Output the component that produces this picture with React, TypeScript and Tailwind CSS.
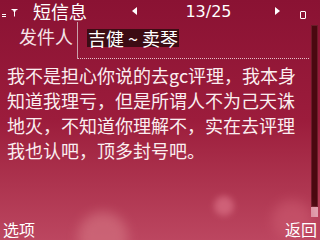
export default function App() {
  const cjk = { fontFamily: '"Noto Sans CJK SC", "Noto Sans", sans-serif' };

  return (
    <div
      className="relative w-[320px] h-[240px] overflow-hidden flex flex-col text-white bg-gradient-to-b from-[#8a1233] via-[#9c1c3c] to-[#bc4660]"
      style={cjk}
    >
      {/* background bokeh */}
      <div className="absolute left-[78px] top-[212px] w-[50px] h-[50px] rounded-full bg-[#d2707f] opacity-70 blur-[6px]" />
      <div className="absolute left-[214px] top-[196px] w-[20px] h-[20px] rounded-full bg-[#d66a80] opacity-80 blur-[3px]" />
      <div className="absolute left-[272px] top-[200px] w-[40px] h-[40px] rounded-full bg-[#cc5a70] opacity-60 blur-[6px]" />

      {/* status / title bar */}
      <div className="relative flex items-center h-[22px] shrink-0">
        <div className="w-[33px] flex items-end h-full pb-[5px] pl-[2px] gap-[5px]">
          <div className="flex flex-col gap-[1px]">
            <div className="w-[4px] h-[1px] bg-white" />
            <div className="w-[4px] h-[1px] bg-white" />
          </div>
          <svg width="7" height="8" viewBox="0 0 7 8">
            <path d="M0.5 0.5 H6.5 M3.5 0.5 V7.5 M1.5 0.5 L3.5 3 L5.5 0.5" stroke="white" strokeWidth="1" fill="none" />
          </svg>
        </div>
        <div className="w-[99px] h-full flex items-center">
          <span className="text-[18px] leading-[20px]">短信息</span>
        </div>
        <div className="w-[10px] flex items-center">
          <div className="w-0 h-0 border-y-[4px] border-y-transparent border-r-[5px] border-r-white" />
        </div>
        <div
          className="w-[133px] text-center text-[16px] leading-[22px] pt-[1px]"
          style={{ fontFamily: '"DejaVu Sans", sans-serif' }}
        >
          13/25
        </div>
        <div className="w-[25px] flex items-center">
          <div className="w-0 h-0 border-y-[4px] border-y-transparent border-l-[5px] border-l-white" />
        </div>
        <div className="flex items-end h-full pb-[3px]">
          <div className="w-[6px] h-[8px] border border-white rounded-[1px]" />
        </div>
      </div>

      {/* content with scrollbar */}
      <div className="flex flex-1 min-h-0">
        <div className="flex-1 flex flex-col">
          <div className="flex h-[37px]">
            <div className="w-[77px] pr-[4px] pt-[3px] text-right text-[18px] leading-[22px] text-[#f4e4e8]">发件人</div>
            <div className="flex-1 flex flex-col border-l border-[#c9a0aa]">
              <div className="flex-1 pl-[9px] pt-[5px]">
                <span className="inline-block bg-[#3c0c14] text-[18px] leading-[18px] h-[18px] px-[1px]">吉健 ~ 卖琴</span>
              </div>
              <div className="border-b border-dotted border-[#e6c0c8] mr-[2px]" />
            </div>
          </div>
          <p className="pl-[7px] pt-[4px] text-[18px] leading-[25px] text-[#fbeef0]">
            我不是担心你说的去gc评理，我本身知道我理亏，但是所谓人不为己天诛地灭，不知道你理解不，实在去评理我也认吧，顶多封号吧。
          </p>
        </div>
        <div className="w-[9px] pr-[2px] pt-[3px] pb-[1px] flex flex-col">
          <div className="flex-1 w-[7px] bg-[#4a0810] border border-[#6a1c28]" />
          <div className="w-[7px] h-[10px] bg-[#e2a4b2]" />
        </div>
      </div>

      {/* soft keys */}
      <div className="relative flex justify-between items-end h-[22px] shrink-0 px-[3px] pb-[1px] text-[16px] leading-[20px]">
        <span>选项</span>
        <span>返回</span>
      </div>
    </div>
  );
}
